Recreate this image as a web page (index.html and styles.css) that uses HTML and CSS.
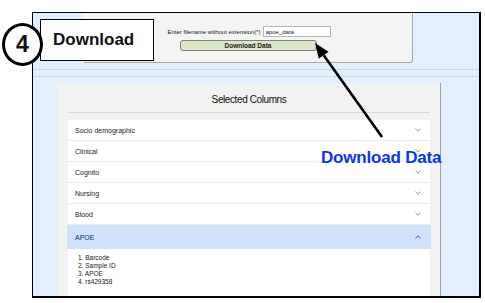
FILE: index.html
```html
<!DOCTYPE html>
<html lang="en">
<head>
    <meta charset="UTF-8">
    <meta name="viewport" content="width=device-width, initial-scale=1.0">
    <title>Download Data</title>
    <link rel="stylesheet" href="styles.css">
</head>
<body>
    <div class="shot">
        <!-- export panel -->
        <div class="top">
            <div class="export">
                <div class="row">
                    <label for="fname">Enter filename without extension(*)</label>
                    <input type="text" id="fname" value="apoe_data">
                </div>
                <button>Download Data</button>
            </div>
        </div>
        <div class="band"></div>

        <!-- selected columns -->
        <div class="card">
            <h2>Selected Columns</h2>
            <div class="acc">
                <div class="item"><span>Socio demographic</span><svg class="chev" viewBox="0 0 6 4"><polyline points="0.5,0.5 3,3.2 5.5,0.5"/></svg></div>
                <div class="item"><span>Clinical</span><svg class="chev" viewBox="0 0 6 4"><polyline points="0.5,0.5 3,3.2 5.5,0.5"/></svg></div>
                <div class="item"><span>Cognito</span><svg class="chev" viewBox="0 0 6 4"><polyline points="0.5,0.5 3,3.2 5.5,0.5"/></svg></div>
                <div class="item"><span>Nursing</span><svg class="chev" viewBox="0 0 6 4"><polyline points="0.5,0.5 3,3.2 5.5,0.5"/></svg></div>
                <div class="item"><span>Blood</span><svg class="chev" viewBox="0 0 6 4"><polyline points="0.5,0.5 3,3.2 5.5,0.5"/></svg></div>
                <div class="item open"><span>APOE</span><svg class="chev" viewBox="0 0 6 4"><polyline points="0.5,3.5 3,0.8 5.5,3.5"/></svg></div>
                <div class="cols">
                    <div>1. Barcode</div>
                    <div>2. Sample ID</div>
                    <div>3. APOE</div>
                    <div>4. rs429358</div>
                </div>
            </div>
        </div>
    </div>

    <!-- annotations -->
    <div class="tag">Download</div>
    <div class="step">4</div>
    <svg class="arrow" viewBox="0 0 485 303">
        <line x1="382" y1="137" x2="323.7" y2="55.2"/>
        <polygon points="315,43 328.6,51.7 318.8,58.7"/>
    </svg>
    <div class="callout">Download Data</div>
</body>
</html>
```

FILE: styles.css
```css
body {
    margin: 0;
    padding: 12px 0 0 32px;
    width: 485px;
    height: 303px;
    box-sizing: border-box;
    overflow: hidden;
    background: #fff;
    font-family: "Liberation Sans", Arial, sans-serif;
    position: relative;
}
.shot {
    width: 446px;
    height: 283px;
    border: 1px solid #000;
    border-right-width: 2px;
    border-bottom-width: 2px;
    background: #e3effc;
    overflow: hidden;
}
.top {
    height: 50px;
    padding-left: 51px;
}
.export {
    width: 329px;
    height: 50px;
    background: #f4f4f4;
    border-right: 1px solid #a9a9a9;
    border-bottom: 1px solid #a9a9a9;
    border-bottom-right-radius: 3px;
    display: flex;
    flex-direction: column;
    align-items: center;
    padding-top: 13px;
    box-sizing: border-box;
}
.row {
    display: flex;
    align-items: center;
    gap: 2px;
    margin-left: 2px;
}
.row label {
    font-size: 6px;
    color: #222;
}
.row input {
    width: 68px;
    height: 11px;
    box-sizing: border-box;
    border: 1px solid #b5b5b5;
    padding: 0 2px;
    font-family: inherit;
    font-size: 6px;
    color: #222;
    outline: none;
}
.export button {
    margin-top: 3px;
    width: 137px;
    height: 11px;
    padding: 0;
    background: #dbe7c7;
    border: 1px solid #808080;
    border-radius: 3px;
    font-family: inherit;
    font-weight: bold;
    font-size: 6.5px;
    color: #222;
    line-height: 9px;
}
.band {
    margin-top: 6px;
    height: 6px;
    border-top: 1px solid #cad8e8;
    border-bottom: 1px solid #cad8e8;
}
.card {
    margin: 6px 0 0 24px;
    width: 384px;
    height: 240px;
    background: #f2f2f2;
    border-right: 1px solid #a3a3a3;
    padding: 0 10px 0 11px;
    box-sizing: border-box;
}
.card h2 {
    margin: 0;
    padding-top: 4px;
    line-height: 25px;
    font-size: 10px;
    font-weight: normal;
    letter-spacing: -0.4px;
    text-align: center;
    color: #111;
    border-bottom: 1px solid #d8d8d8;
}
.acc {
    margin-top: 7px;
}
.item {
    height: 20px;
    background: #fff;
    border-bottom: 1px solid #ebebeb;
    display: flex;
    align-items: center;
    justify-content: space-between;
    padding: 0 9px 0 7px;
    font-size: 7px;
    color: #1a1a1a;
}
.chev {
    width: 6px;
    height: 4px;
    fill: none;
    stroke: #777;
    stroke-width: 0.7;
}
.item.open {
    height: 24px;
    margin: 0 -1px;
    padding: 0 10px 0 8px;
    background: #cfe1fb;
    border-bottom: none;
    color: #0d2f66;
}
.item.open .chev {
    stroke: #0d2f66;
}
.cols {
    background: #fff;
    padding: 5px 0 0 10px;
    font-size: 6.5px;
    line-height: 8px;
    color: #1a1a1a;
    height: 60px;
}
.tag {
    position: absolute;
    left: 40px;
    top: 19px;
    width: 100px;
    height: 40px;
    background: #fff;
    border: 1px solid #000;
    font-weight: bold;
    font-size: 17px;
    line-height: 40px;
    padding-left: 12px;
    color: #111;
}
.step {
    position: absolute;
    left: 2px;
    top: 23px;
    width: 35px;
    height: 37px;
    border: 3px solid #000;
    border-radius: 50%;
    background: #fff;
    font-weight: bold;
    font-size: 23px;
    line-height: 37px;
    text-align: center;
    color: #111;
}
.arrow {
    position: absolute;
    left: 0;
    top: 0;
    width: 485px;
    height: 303px;
}
.arrow line {
    stroke: #000;
    stroke-width: 2.6;
}
.arrow polygon {
    fill: #000;
}
.callout {
    position: absolute;
    left: 321px;
    top: 148px;
    font-weight: bold;
    font-size: 17px;
    letter-spacing: -0.2px;
    color: #0a36f0;
}
```
